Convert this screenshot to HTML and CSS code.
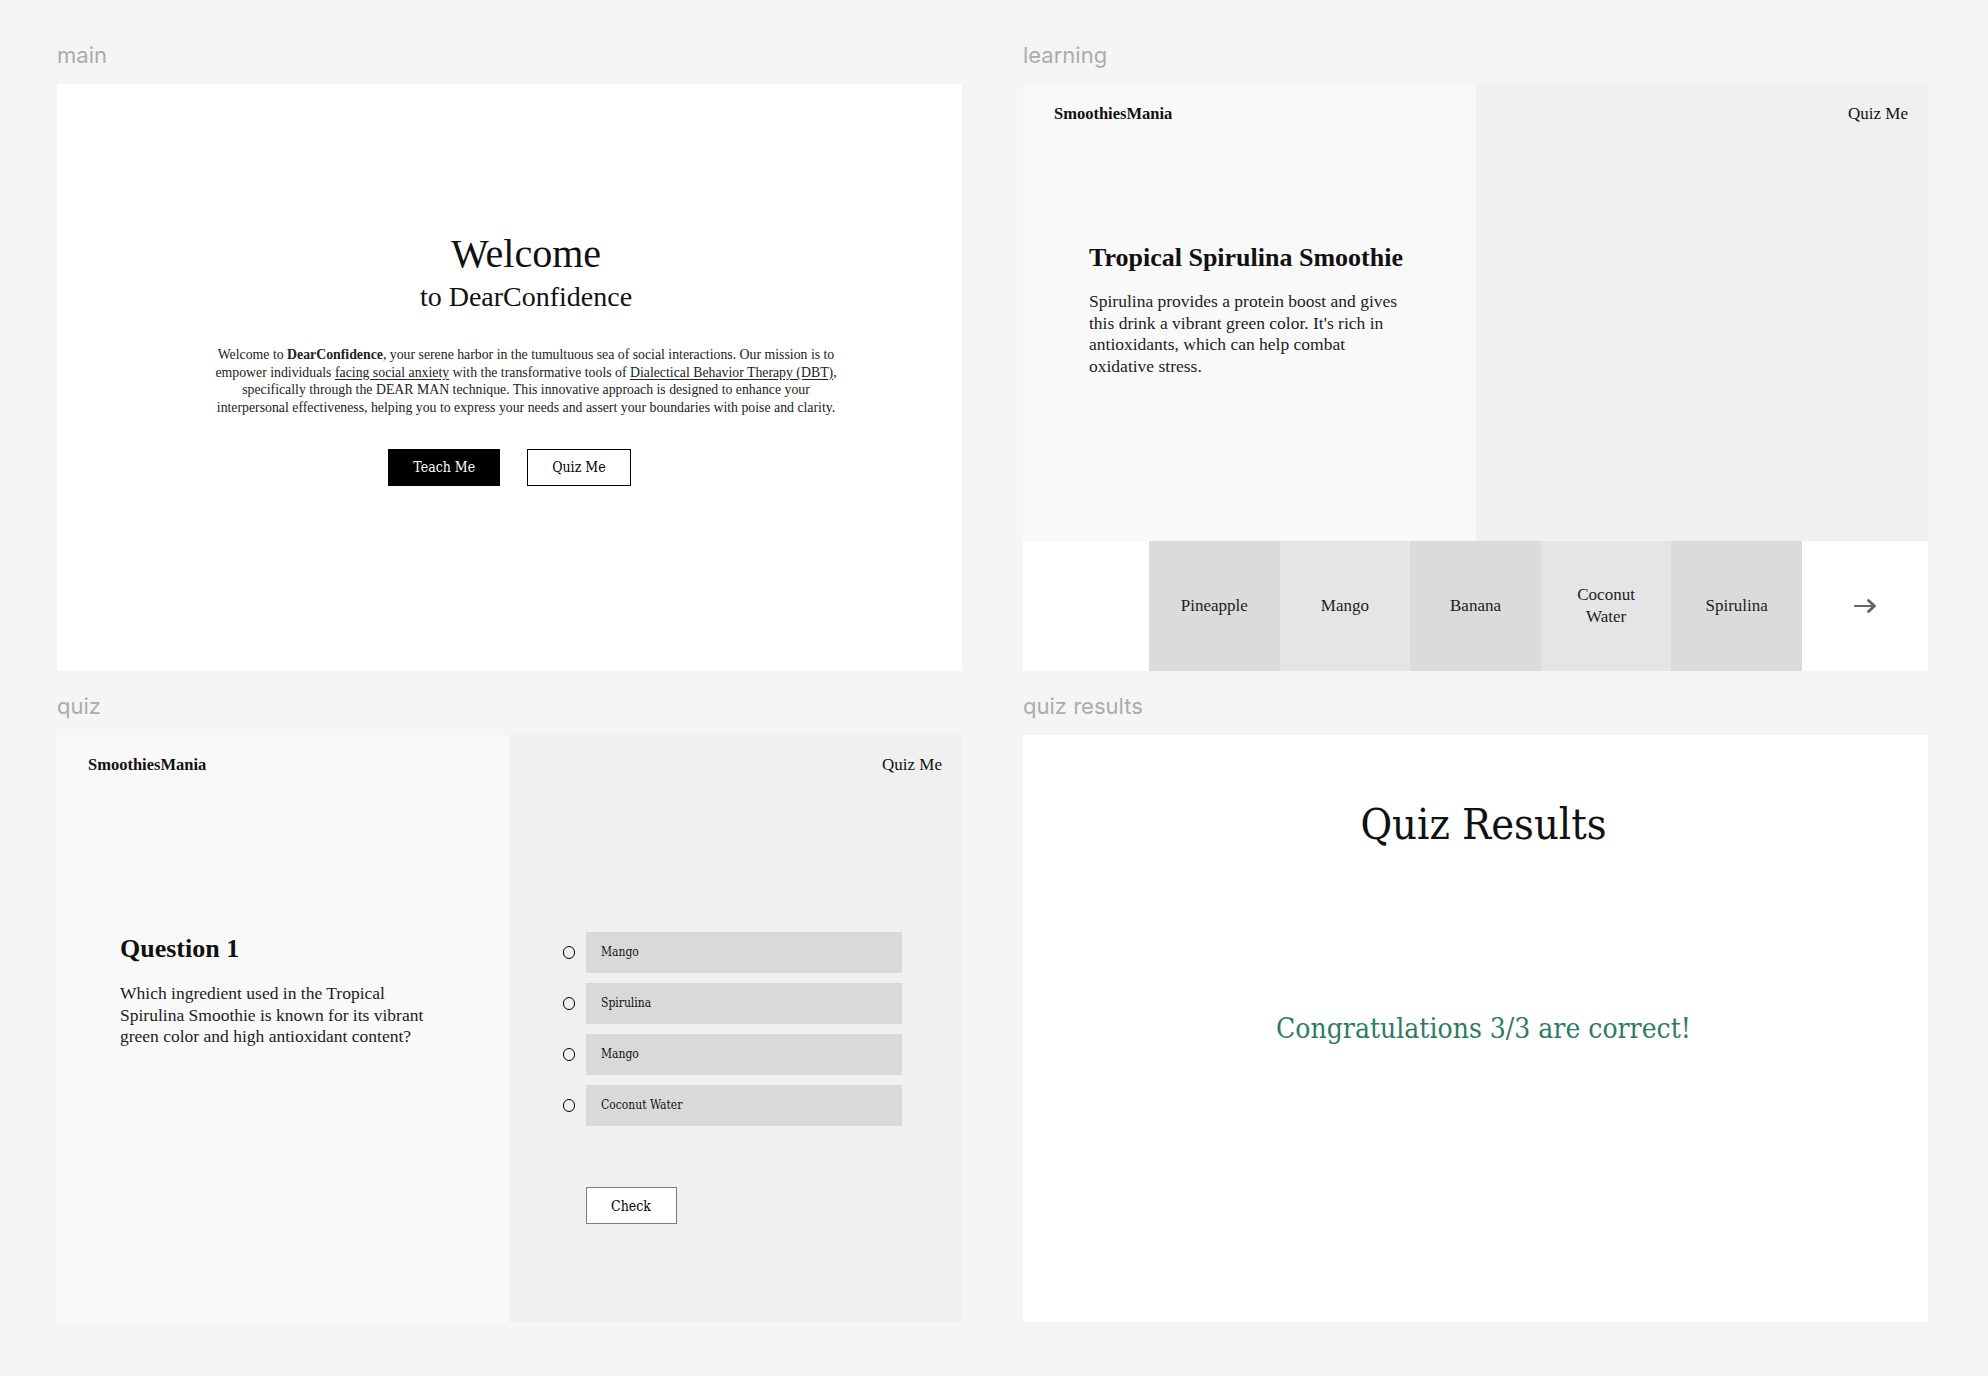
FILE: index.html
```html
<!DOCTYPE html>
<html lang="en">
<head>
<meta charset="utf-8">
<title>Frames</title>
<link rel="stylesheet" href="styles.css">
</head>
<body>
<div class="board">
  <section class="cell">
    <div class="label">main</div>
    <div class="frame main-frame">
      <div class="hero">
        <h1 class="welcome">Welcome</h1>
        <div class="welcome-sub">to DearConfidence</div>
        <p class="intro">Welcome to <b>DearConfidence</b>, your serene harbor in the tumultuous sea of social interactions. Our mission is to<br>empower individuals <u>facing social anxiety</u> with the transformative tools of <u>Dialectical Behavior Therapy (DBT)</u>,<br>specifically through the DEAR MAN technique. This innovative approach is designed to enhance your<br>interpersonal effectiveness, helping you to express your needs and assert your boundaries with poise and clarity.</p>
      </div>
      <div class="actions">
        <button class="btn btn-dark">Teach Me</button>
        <button class="btn btn-light">Quiz Me</button>
      </div>
    </div>
  </section>

  <section class="cell">
    <div class="label">learning</div>
    <div class="frame learn-frame">
      <div class="panel panel-left">
        <div class="brand">SmoothiesMania</div>
        <div class="lesson">
          <h2 class="title">Tropical Spirulina Smoothie</h2>
          <p class="body-text">Spirulina provides a protein boost and gives<br>this drink a vibrant green color. It's rich in<br>antioxidants, which can help combat<br>oxidative stress.</p>
        </div>
      </div>
      <div class="panel panel-right">
        <div class="nav-link">Quiz Me</div>
      </div>
      <div class="strip">
        <div class="strip-blank"></div>
        <div class="tile tile-dark">Pineapple</div>
        <div class="tile tile-light">Mango</div>
        <div class="tile tile-dark">Banana</div>
        <div class="tile tile-light">Coconut<br>Water</div>
        <div class="tile tile-dark">Spirulina</div>
        <div class="strip-next">
          <svg class="arrow" width="28" height="18" viewBox="0 0 28 18" aria-hidden="true">
            <path d="M4 9 H23" fill="none" stroke="#4a4a4a" stroke-width="2.2" stroke-linecap="round"/>
            <path d="M17.5 3.5 L23.5 9 L17.5 14.5" fill="none" stroke="#4a4a4a" stroke-width="2.8" stroke-linecap="round" stroke-linejoin="round"/>
          </svg>
        </div>
      </div>
    </div>
  </section>

  <section class="cell">
    <div class="label">quiz</div>
    <div class="frame quiz-frame">
      <div class="panel panel-left">
        <div class="brand">SmoothiesMania</div>
        <div class="question">
          <h2 class="title">Question 1</h2>
          <p class="body-text">Which ingredient used in the Tropical<br>Spirulina Smoothie is known for its vibrant<br>green color and high antioxidant content?</p>
        </div>
      </div>
      <div class="panel panel-right quiz-right">
        <div class="nav-link">Quiz Me</div>
        <div class="options">
          <label class="option"><span class="radio"></span><span class="choice">Mango</span></label>
          <label class="option"><span class="radio"></span><span class="choice">Spirulina</span></label>
          <label class="option"><span class="radio"></span><span class="choice">Mango</span></label>
          <label class="option"><span class="radio"></span><span class="choice">Coconut Water</span></label>
          <button class="check">Check</button>
        </div>
      </div>
    </div>
  </section>

  <section class="cell">
    <div class="label">quiz results</div>
    <div class="frame results-frame">
      <h2 class="results-title">Quiz Results</h2>
      <div class="results-msg">Congratulations 3/3 are correct!</div>
    </div>
  </section>
</div>
</body>
</html>
```

FILE: styles.css
```css
* { box-sizing: border-box; }

html, body {
  margin: 0;
  background: #f5f5f5;
}

body {
  font-family: "Liberation Serif", "Times New Roman", serif;
  color: #111;
}

.board {
  display: grid;
  grid-template-columns: 905px 905px;
  column-gap: 61px;
  row-gap: 22px;
  padding: 42px 0 0 57px;
}

.cell {
  display: flex;
  flex-direction: column;
}

.label {
  font-family: Inter, "Noto Sans", sans-serif;
  font-size: 22px;
  line-height: 26px;
  color: #acacac;
  margin-bottom: 16px;
}

.frame {
  height: 587px;
  overflow: hidden;
}

/* ---------- main ---------- */
.main-frame {
  background: #ffffff;
  display: flex;
  flex-direction: column;
  padding-top: 146px;
}

.hero {
  padding-left: 33px;
  display: flex;
  flex-direction: column;
  align-items: center;
  text-align: center;
}

.welcome {
  margin: 0;
  font-size: 40px;
  line-height: 48px;
  font-weight: 400;
}

.welcome-sub {
  margin-top: 2px;
  font-size: 28px;
  line-height: 34px;
}

.intro {
  margin: 32px 0 0;
  font-size: 13.8px;
  line-height: 17.7px;
  color: #222;
  white-space: nowrap;
}

.intro u {
  text-underline-offset: 2px;
}

.actions {
  margin-top: 32px;
  display: flex;
  justify-content: center;
  gap: 27px;
}

.btn {
  height: 37px;
  padding: 0 24px;
  border: 1.5px solid #000;
  font-family: "DejaVu Serif Condensed", "DejaVu Serif", serif;
  font-stretch: semi-condensed;
  font-size: 14px;
  cursor: pointer;
}

.btn-dark {
  background: #000;
  color: #fff;
}

.btn-light {
  background: #fff;
  color: #000;
}

/* ---------- learning & quiz shared ---------- */
.learn-frame {
  display: grid;
  grid-template-columns: 1fr 1fr;
  grid-template-rows: 457px 130px;
}

.quiz-frame {
  display: grid;
  grid-template-columns: 1fr 1fr;
}

.panel-left {
  background: #f9f9f9;
  padding: 20px 0 0 31px;
}

.panel-right {
  background: #f0f0f0;
  padding: 20px 20px 0;
}

.brand {
  font-size: 16.5px;
  line-height: 20px;
  font-weight: 700;
}

.nav-link {
  font-size: 17px;
  line-height: 20px;
  text-align: right;
}

.title {
  margin: 0;
  font-size: 26px;
  line-height: 32px;
  font-weight: 700;
}

.body-text {
  margin: 17px 0 0;
  font-size: 17.5px;
  line-height: 21.5px;
  color: #1c1c1c;
  white-space: nowrap;
}

.lesson {
  margin: 118px 0 0 35px;
}

.question {
  margin: 158px 0 0 32px;
}

.question .body-text {
  margin-top: 18px;
}

/* ---------- learning strip ---------- */
.strip {
  grid-column: 1 / -1;
  display: grid;
  grid-template-columns: 126px repeat(5, 1fr) 126px;
  background: #ffffff;
}

.tile {
  display: flex;
  align-items: center;
  justify-content: center;
  text-align: center;
  font-size: 17px;
  line-height: 21.6px;
  color: #1c1c1c;
}

.tile-dark { background: #dbdbdb; }
.tile-light { background: #e5e5e5; }

.strip-next {
  display: flex;
  align-items: center;
  justify-content: center;
}

.arrow {
  display: block;
  filter: blur(0.6px);
  opacity: 0.85;
}

/* ---------- quiz options ---------- */
.options {
  margin: 157px 40px 0 33px;
  display: flex;
  flex-direction: column;
  gap: 10px;
}

.option {
  display: flex;
  align-items: center;
  gap: 11px;
  height: 41px;
}

.radio {
  flex: none;
  width: 12.5px;
  height: 12.5px;
  border: 1.5px solid #000;
  border-radius: 50%;
}

.choice {
  flex: 1;
  height: 41px;
  background: #d9d9d9;
  padding-left: 15px;
  font-family: "DejaVu Serif Condensed", "DejaVu Serif", serif;
  font-stretch: semi-condensed;
  font-size: 12px;
  line-height: 41px;
  color: #111;
}

.check {
  align-self: flex-start;
  margin: 51px 0 0 23px;
  width: 91px;
  height: 37px;
  background: #fff;
  border: 1px solid #7d7d7d;
  font-family: "DejaVu Serif Condensed", "DejaVu Serif", serif;
  font-stretch: semi-condensed;
  font-size: 14px;
  color: #000;
  cursor: pointer;
}

/* ---------- quiz results ---------- */
.results-frame {
  background: #ffffff;
  display: flex;
  flex-direction: column;
  align-items: center;
  padding: 63px 0 0 16px;
}

.results-title {
  margin: 0;
  font-family: "DejaVu Serif Condensed", "DejaVu Serif", serif;
  font-stretch: semi-condensed;
  font-weight: 400;
  font-size: 43px;
  line-height: 52px;
}

.results-msg {
  margin-top: 162px;
  font-family: "DejaVu Serif Condensed", "DejaVu Serif", serif;
  font-stretch: semi-condensed;
  font-size: 28px;
  line-height: 34px;
  color: #2f7a66;
}
```
